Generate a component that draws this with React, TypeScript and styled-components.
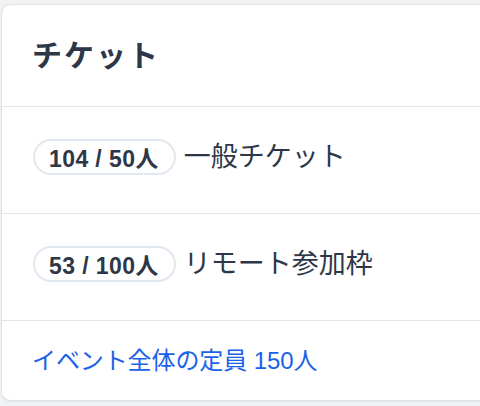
import styled, { createGlobalStyle } from "styled-components";

const tickets = [
    { count: 104, capacity: 50, label: "一般チケット" },
    { count: 53, capacity: 100, label: "リモート参加枠" }
];

const GlobalStyle = createGlobalStyle`
    html, body {
        margin: 0;
        padding: 0;
        background: #f1f2f4;
        overflow: hidden;
    }
    body {
        font-family: "Liberation Sans", "Noto Sans CJK JP", sans-serif;
        color: #2d3748;
    }
`;

const App = () => {
    return (
        <>
            <GlobalStyle />
            <Page>
                <Card>
                    <CardHeader>チケット</CardHeader>
                    {tickets.map((t, i) => (
                        <TicketRow key={i}>
                            <CountBadge>{t.count} / {t.capacity}人</CountBadge>
                            <TicketName>{t.label}</TicketName>
                        </TicketRow>
                    ))}
                    <CardFooter>イベント全体の定員 150人</CardFooter>
                </Card>
            </Page>
        </>
    );
};

export default App;

const Page = styled.div`
    padding: 4px 0 0 1px;
    height: 406px;
    box-sizing: border-box;
`;

const Card = styled.div`
    width: 540px;
    background: #ffffff;
    border: 1px solid #e3e4e7;
    border-radius: 10px;
    box-shadow: 0 1px 2px rgba(0, 0, 0, 0.06);
`;

const CardHeader = styled.div`
    padding: 32px 30px;
    line-height: 37px;
    font-size: 30px;
    font-weight: 700;
    letter-spacing: 2px;
    border-bottom: 1px solid #e2e4ea;
`;

const TicketRow = styled.div`
    display: flex;
    align-items: center;
    gap: 8px;
    padding: 32px 31px 38px;
    border-bottom: 1px solid #e2e4ea;
`;

const CountBadge = styled.span`
    display: inline-flex;
    align-items: center;
    height: 36px;
    box-sizing: border-box;
    padding: 0 15px 0 14px;
    border: 2px solid #e2e8f0;
    border-radius: 18px;
    font-size: 23px;
    font-weight: 700;
    letter-spacing: 0.4px;
    white-space: nowrap;
`;

const TicketName = styled.span`
    font-size: 27px;
    line-height: 36px;
`;

const CardFooter = styled.div`
    padding: 26px 30px;
    line-height: 27px;
    font-size: 24px;
    letter-spacing: -0.1px;
    color: #1a62e8;
`;
